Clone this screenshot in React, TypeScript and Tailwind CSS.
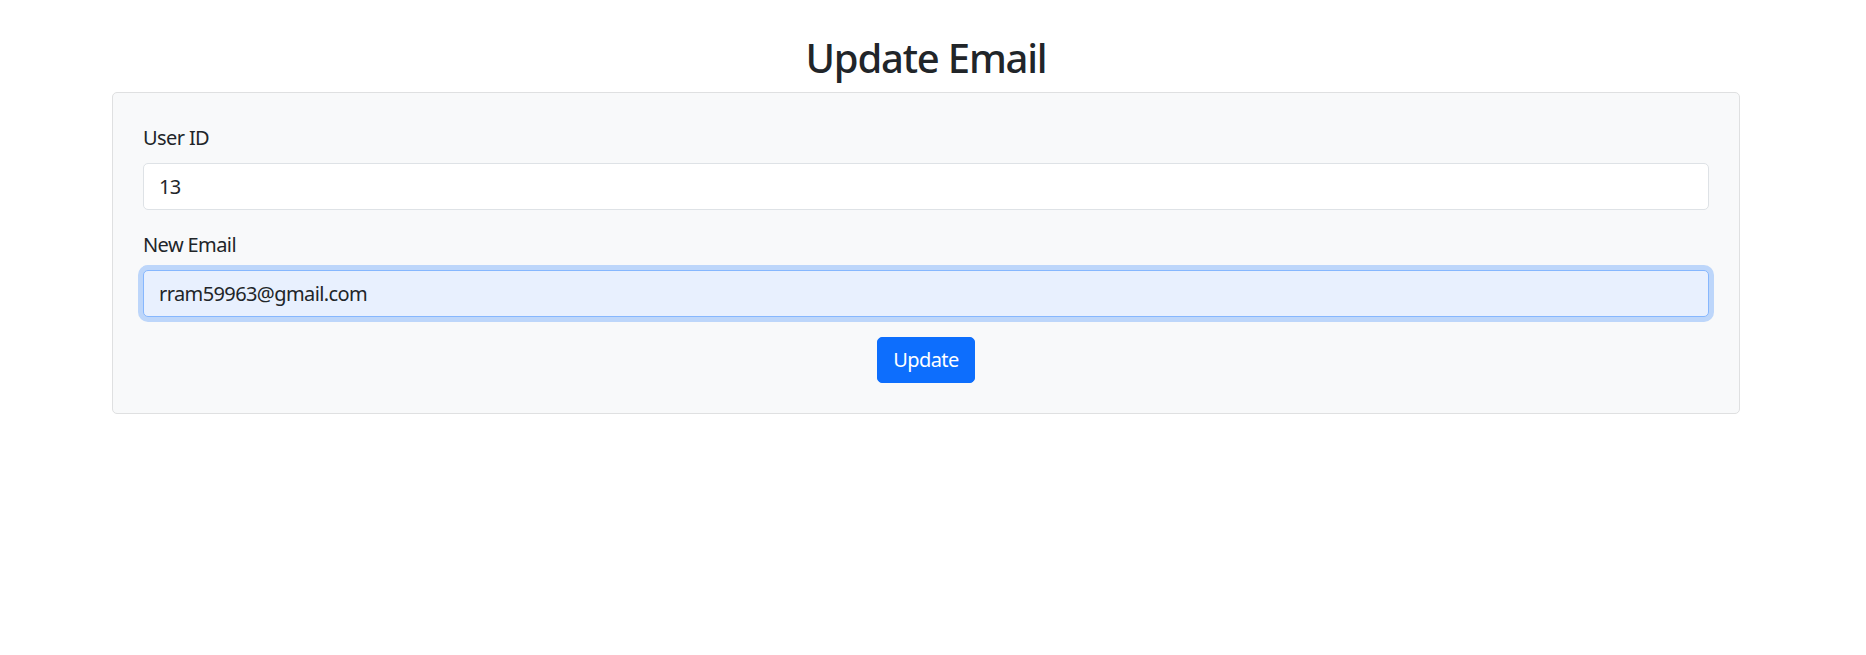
import React from 'react';

const font = { fontFamily: '"Noto Sans", "Open Sans", sans-serif' };

const App: React.FC = () => {
  return (
    <div className="min-h-[655px] bg-white text-[#212529] tracking-[-0.6px]" style={font}>
      <div className="w-[1628px] ml-[112px] pt-[34px]">
        <h2 className="text-center text-[40px] leading-[48px] font-medium mb-[10px] tracking-[-1.2px]">Update Email</h2>
        <div className="bg-[#f8f9fa] border border-[#dfe0e1] rounded-[5px] p-[30px]">
          <div className="mb-[20px]">
            <label className="block text-[20px] leading-[30px] mb-[10px]">User ID</label>
            <input
              type="text"
              defaultValue="13"
              className="block w-full h-[47px] px-[15px] text-[20px] tracking-[-0.6px] bg-white border border-[#dee2e6] rounded-[5px] outline-none"
            />
          </div>
          <div className="mb-[20px]">
            <label className="block text-[20px] leading-[30px] mb-[10px]">New Email</label>
            <input
              type="email"
              defaultValue="rram59963@gmail.com"
              className="block w-full h-[47px] px-[15px] text-[20px] tracking-[-0.6px] bg-[#e8f0fe] border border-[#86b7fe] rounded-[5px] outline-none shadow-[0_0_0_5px_rgba(13,110,253,0.25)]"
            />
          </div>
          <div className="flex justify-center">
            <button className="h-[46px] px-[15px] text-[20px] tracking-[-0.6px] text-white bg-[#0d6efd] border border-[#0d6efd] rounded-[5px]">
              Update
            </button>
          </div>
        </div>
      </div>
    </div>
  );
};

export default App;
